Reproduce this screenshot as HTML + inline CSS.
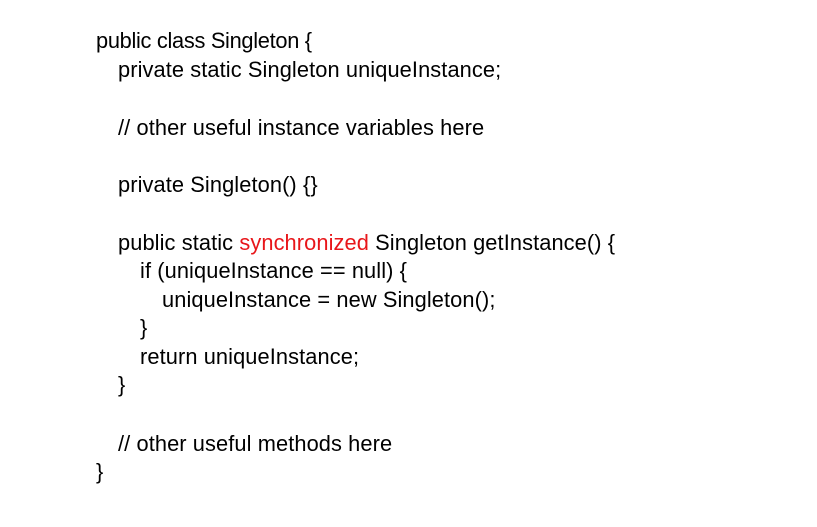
<!DOCTYPE html>
<html><head><meta charset="utf-8"><style>
html,body{margin:0;padding:0;background:#fff;width:817px;height:527px;overflow:hidden}
.l{position:absolute;font-family:"Liberation Sans",sans-serif;font-size:21.8px;color:#000;white-space:pre;line-height:24px;letter-spacing:0.1px}
.r{color:#e8161a}
</style></head><body>
<div class="l" style="left:96px;top:29px;letter-spacing:-0.3px">public class Singleton {</div>
<div class="l" style="left:118px;top:58px">private static Singleton uniqueInstance;</div>
<div class="l" style="left:118px;top:116px">// other useful instance variables here</div>
<div class="l" style="left:118px;top:173px">private Singleton() {}</div>
<div class="l" style="left:118px;top:231px">public static <span class="r">synchronized</span> Singleton getInstance() {</div>
<div class="l" style="left:140px;top:259px">if (uniqueInstance == null) {</div>
<div class="l" style="left:162px;top:288px">uniqueInstance = new Singleton();</div>
<div class="l" style="left:140px;top:316px">}</div>
<div class="l" style="left:140px;top:345px">return uniqueInstance;</div>
<div class="l" style="left:118px;top:373px">}</div>
<div class="l" style="left:118px;top:432px">// other useful methods here</div>
<div class="l" style="left:96px;top:460px">}</div>
</body></html>
